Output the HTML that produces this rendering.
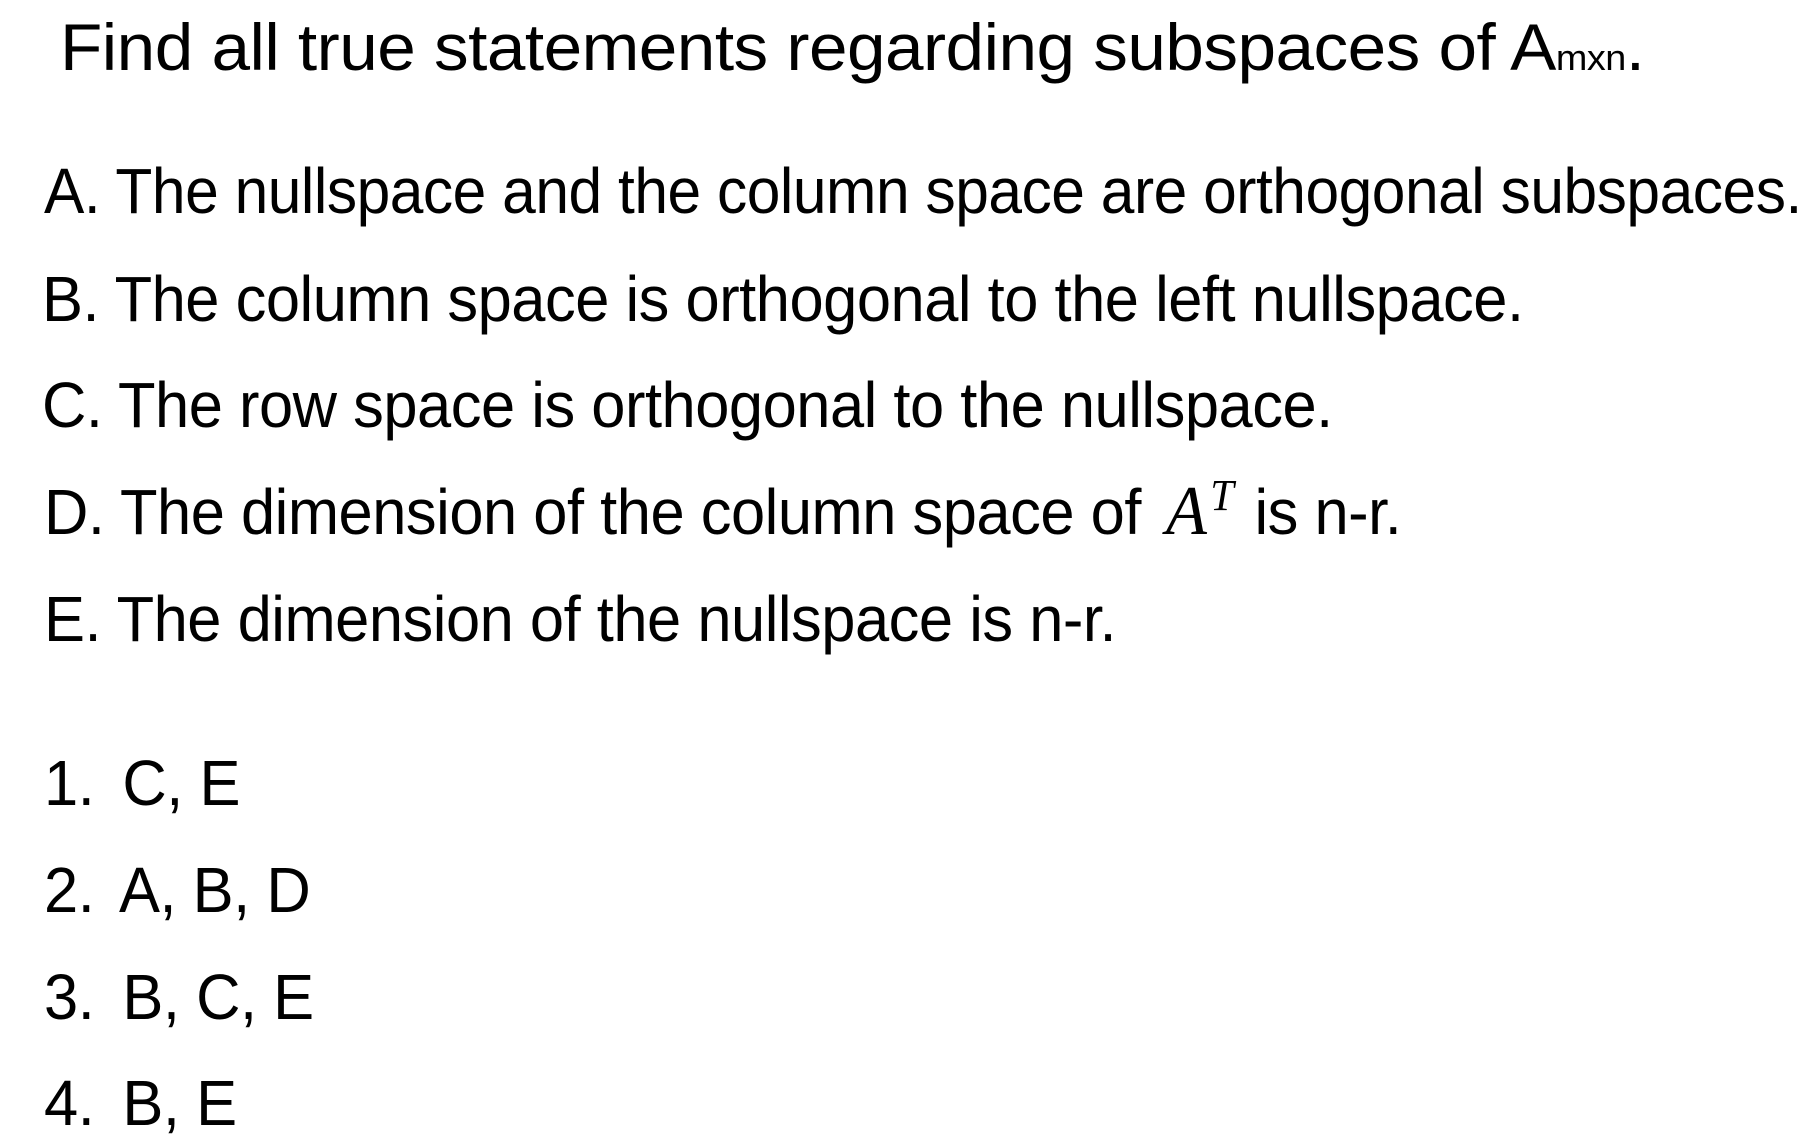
<!DOCTYPE html>
<html><head><meta charset="utf-8"><style>
body{margin:0;width:1812px;height:1146px;background:#fff;overflow:hidden;font-family:"Liberation Sans",sans-serif;color:#000}
.l{position:absolute;white-space:nowrap;font-size:64px;line-height:64px;letter-spacing:-0.5px;transform:scaleX(0.96);transform-origin:0 0}
.sub{font-size:36px}
i{font-family:"Liberation Serif",serif;font-size:70px;display:inline-block;margin:0 22px 0 26px}
sup{line-height:0;font-size:44px;margin-left:4px}
.g{display:inline-block;width:12px}
</style></head><body>
<div class="l" style="left:60px;top:15px;font-size:66px;transform:scaleX(1.05)">Find all true statements regarding subspaces of A<span class="sub">mxn</span>.</div>
<div class="l" style="left:44px;top:159px;transform:scaleX(0.945)">A. The nullspace and the column space are orthogonal subspaces.</div>
<div class="l" style="left:42px;top:267px">B. The column space is orthogonal to the left nullspace.</div>
<div class="l" style="left:42px;top:373px">C. The row space is orthogonal to the nullspace.</div>
<div class="l" style="left:44px;top:480px">D. The dimension of the column space of<i>A<sup>T</sup></i>is n-r.</div>
<div class="l" style="left:44px;top:587px">E. The dimension of the nullspace is n-r.</div>
<div class="l" style="left:44px;top:751px">1.<span class="g"></span> C, E</div>
<div class="l" style="left:44px;top:858px">2.<span class="g"></span> A, B, D</div>
<div class="l" style="left:44px;top:965px">3.<span class="g"></span> B, C, E</div>
<div class="l" style="left:44px;top:1071px">4.<span class="g"></span> B, E</div>
</body></html>
